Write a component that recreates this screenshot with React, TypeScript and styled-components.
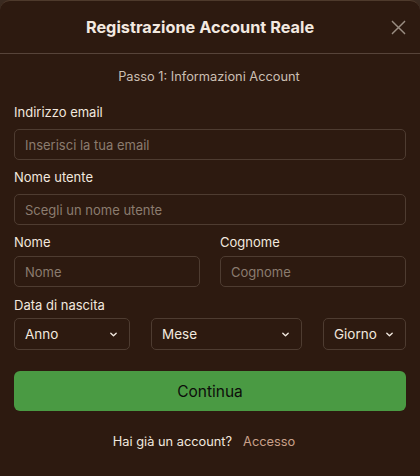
import styled, { createGlobalStyle } from "styled-components";

const Global = createGlobalStyle`
    html, body { margin: 0; padding: 0; background: #3a2a20; }
    body { font-family: Inter, "Noto Sans", sans-serif; }
    * { box-sizing: border-box; }
`

const Modal = styled.div`
    width: 420px; height: 476px;
    background-color: #2d1a10;
    border-top: 1px solid #4e3a2c;
    border-radius: 10px 10px 0 0;
    display: flex;
    flex-direction: column;
    color: #f1e8df;
`

const Header = styled.div`
    height: 53px;
    display: flex;
    align-items: center;
    justify-content: center;
    padding-right: 20px;
    position: relative;
    border-bottom: 1px solid #57443a;
`

const Title = styled.h1`
    margin: 0;
    font-size: 16.3px;
    font-weight: 700;
    color: #f3e9e0;
`

const Close = styled.button`
    position: absolute;
    right: 13px; top: 17px;
    width: 18px; height: 18px;
    padding: 0;
    background: none; border: none;
    color: #9a8d82;
    display: flex; align-items: center; justify-content: center;
`

const Body = styled.form`
    padding: 15px 14px 0 14px;
    display: flex;
    flex-direction: column;
`

const Step = styled.div`
    text-align: center;
    font-size: 12.8px;
    line-height: 16px;
    color: #cbbfb3;
    margin-bottom: 19px;
    padding-right: 2px;
`

const Field = styled.div<{ gap: number, space?: number }>`
    display: flex;
    flex-direction: column;
    gap: ${p => p.gap}px;
    margin-bottom: ${p => p.space ?? 9}px;
    flex: 1;
`

const Label = styled.label`
    font-size: 13px;
    color: #f1e8df;
    line-height: 16px;
`

const Input = styled.input`
    height: 31px;
    width: 100%;
    background: transparent;
    border: 1px solid #4e3c31;
    border-radius: 5px;
    padding: 0 10px;
    font-family: inherit;
    font-size: 13px;
    color: #f1e8df;
    &::placeholder { color: #8b7c6f; }
`

const Row = styled.div<{ gap: number }>`
    display: flex;
    gap: ${p => p.gap}px;
`

const Select = styled.div<{ w: number }>`
    width: ${p => p.w}px;
    height: 32px;
    border: 1px solid #4e3c31;
    border-radius: 5px;
    padding: 0 11px 0 10px;
    display: flex;
    align-items: center;
    justify-content: space-between;
    font-size: 13.5px;
    color: #f1e8df;
`

const Submit = styled.button`
    margin-top: 12px;
    height: 40px;
    width: 100%;
    background-color: #4a9a43;
    border: none;
    border-radius: 6px;
    font-family: inherit;
    font-size: 15.5px;
    color: #0d0d0a;
`

const Footer = styled.div`
    margin-top: 23px;
    padding-right: 12px;
    display: flex;
    justify-content: center;
    gap: 11px;
    font-size: 12.8px;
    line-height: 16px;
    color: #f1e8df;
`

const Link = styled.a`
    color: #c9a089;
`

const Chevron = () => (
    <svg width="9" height="9" viewBox="0 0 10 10" fill="none" stroke="currentColor" strokeWidth="1.5" strokeLinecap="round" strokeLinejoin="round">
        <path d="M2 3.5 L5 6.5 L8 3.5" />
    </svg>
)

const DateSelect = (props: { label: string, w: number }) => (
    <Select w={props.w}>
        <span>{props.label}</span>
        <Chevron />
    </Select>
)

const App = () => {
    return (
        <>
            <Global />
            <Modal>
                <Header>
                    <Title>Registrazione Account Reale</Title>
                    <Close type="button">
                        <svg width="15" height="15" viewBox="0 0 16 16" stroke="currentColor" strokeWidth="1.6" strokeLinecap="round">
                            <path d="M1.5 1.5 L14.5 14.5 M14.5 1.5 L1.5 14.5" />
                        </svg>
                    </Close>
                </Header>
                <Body>
                    <Step>Passo 1: Informazioni Account</Step>
                    <Field gap={9}>
                        <Label>Indirizzo email</Label>
                        <Input placeholder="Inserisci la tua email" />
                    </Field>
                    <Field gap={9}>
                        <Label>Nome utente</Label>
                        <Input placeholder="Scegli un nome utente" />
                    </Field>
                    <Row gap={20}>
                        <Field gap={6} space={10}>
                            <Label>Nome</Label>
                            <Input placeholder="Nome" />
                        </Field>
                        <Field gap={6} space={10}>
                            <Label>Cognome</Label>
                            <Input placeholder="Cognome" />
                        </Field>
                    </Row>
                    <Field gap={5} space={9}>
                        <Label>Data di nascita</Label>
                        <Row gap={21}>
                            <DateSelect label="Anno" w={116} />
                            <DateSelect label="Mese" w={151} />
                            <DateSelect label="Giorno" w={83} />
                        </Row>
                    </Field>
                    <Submit type="button">Continua</Submit>
                    <Footer>
                        <span>Hai già un account?</span>
                        <Link>Accesso</Link>
                    </Footer>
                </Body>
            </Modal>
        </>
    );
}

export default App;
